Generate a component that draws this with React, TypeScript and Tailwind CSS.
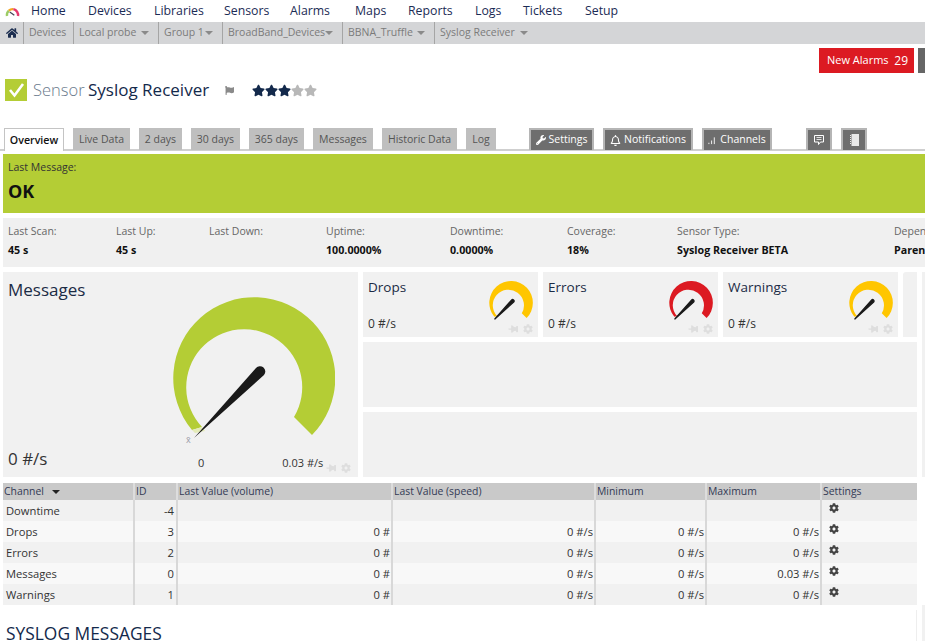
import React from "react";
import { FaHome, FaCog, FaWrench, FaStar, FaThumbtack, FaFlag, FaRegBell } from "react-icons/fa";

const nav = [
  ["Home", "w-[57px]"],
  ["Devices", "w-[66px]"],
  ["Libraries", "w-[70px]"],
  ["Sensors", "w-[66px]"],
  ["Alarms", "w-[65px]"],
  ["Maps", "w-[53px]"],
  ["Reports", "w-[67px]"],
  ["Logs", "w-[48px]"],
  ["Tickets", "w-[62px]"],
  ["Setup", "w-[50px]"],
];

const crumbs = [
  ["Devices", false, "w-[50px]"],
  ["Local probe", true, "w-[85px]"],
  ["Group 1", true, "w-[64px]"],
  ["BroadBand_Devices", true, "w-[120px]"],
  ["BBNA_Truffle", true, "w-[92px]"],
  ["Syslog Receiver", true, "w-[103px]"],
] as const;

const tabs = [
  ["Live Data", "w-[57px]"],
  ["2 days", "w-[43px]"],
  ["30 days", "w-[49px]"],
  ["365 days", "w-[55px]"],
  ["Messages", "w-[60px]"],
  ["Historic Data", "w-[75px]"],
  ["Log", "w-[30px]"],
];

const stats = [
  ["Last Scan:", "45 s", "w-[108px]"],
  ["Last Up:", "45 s", "w-[93px]"],
  ["Last Down:", "", "w-[117px]"],
  ["Uptime:", "100.0000%", "w-[124px]"],
  ["Downtime:", "0.0000%", "w-[117px]"],
  ["Coverage:", "18%", "w-[110px]"],
  ["Sensor Type:", "Syslog Receiver BETA", "w-[217px]"],
  ["Dependency:", "Parent", "w-[100px]"],
];

const rows = [
  ["Downtime", "-4", "", "", "", ""],
  ["Drops", "3", "0 #", "0 #/s", "0 #/s", "0 #/s"],
  ["Errors", "2", "0 #", "0 #/s", "0 #/s", "0 #/s"],
  ["Messages", "0", "0 #", "0 #/s", "0 #/s", "0.03 #/s"],
  ["Warnings", "1", "0 #", "0 #/s", "0 #/s", "0 #/s"],
];

function Gauge({ color, className, thick }: { color: string; className: string; thick?: boolean }) {
  return (
    <svg viewBox="173 297 162 145" className={className}>
      <path d="M192 430 A81 81 0 1 1 312 435 L294 417 A58 58 0 1 0 202 427 Z" fill={color} />
      <path d="M192 430 L202 427 L205 431 L195 433 Z" fill="#e4ebb8" opacity={thick ? 0 : 1} />
      <path
        d="M194 438 L256 368 A5 5 0 0 1 264 375 Z"
        fill="#1a1a1a"
        stroke="#1a1a1a"
        strokeWidth={thick ? 5 : 0}
        strokeLinejoin="round"
      />
    </svg>
  );
}

function PinGear() {
  return (
    <div className="flex items-center gap-[5px] text-[#dedede]">
      <FaThumbtack className="w-[10px] h-[10px] rotate-90" />
      <FaCog className="w-[10px] h-[10px]" />
    </div>
  );
}

function SmallGauge({ title, color }: { title: string; color: string }) {
  return (
    <div className="w-[175px] h-[65px] bg-[#f1f1f1] flex justify-between pl-[5px] pr-[5px]">
      <div className="flex flex-col">
        <div className="text-[13.5px] leading-[18px] mt-[6px] text-[#1b2b45]">{title}</div>
        <div className="text-[12px] leading-[16px] mt-[20px] text-[#333]">0 #/s</div>
      </div>
      <div className="flex flex-col items-end">
        <Gauge color={color} thick className="w-[44px] h-[39px] mt-[9px]" />
        <div className="mt-[4px]"><PinGear /></div>
      </div>
    </div>
  );
}

function TabIcon({ children, label }: { children: React.ReactNode; label?: string }) {
  return (
    <div className="h-[22px] flex items-center justify-center gap-[3px] bg-[#6e6e6e] border-2 border-b-0 border-[#b5b5b5] text-white text-[10.5px] w-full">
      {children}
      {label && <span>{label}</span>}
    </div>
  );
}

export default function App() {
  return (
    <div
      className="w-[925px] h-[641px] overflow-hidden bg-white text-[#333]"
      style={{ fontFamily: '"Open Sans", "Noto Sans", sans-serif' }}
    >
      {/* top nav */}
      <div className="h-[22px] flex items-center">
        <div className="w-[31px] pl-[5px] flex items-center">
          <svg viewBox="0 0 16 12" className="w-[15px] h-[11px]">
            <path d="M2 11 A6.5 6.5 0 0 1 4 5" fill="none" stroke="#9ccc65" strokeWidth="2.6" />
            <path d="M4 5 A6.5 6.5 0 0 1 9 3.5" fill="none" stroke="#f5a623" strokeWidth="2.6" />
            <path d="M9 3.5 A6.5 6.5 0 0 1 14 11" fill="none" stroke="#e5386d" strokeWidth="2.6" />
            <path d="M10 10 L5 6.5" stroke="#445" strokeWidth="1.4" />
          </svg>
        </div>
        {nav.map(([t, w]) => (
          <div key={t} className={`${w} text-[12.3px] text-[#1b2b55] whitespace-nowrap`}>{t}</div>
        ))}
      </div>

      {/* breadcrumb */}
      <div className="h-[22px] bg-[#d4d5d7] flex items-center text-[10.5px] text-[#7b7b7b]">
        <div className="w-[23px] h-full flex items-center justify-center text-[#1c2e50]">
          <FaHome className="w-[12px] h-[12px]" />
        </div>
        {crumbs.map(([t, caret, w]) => (
          <div key={t} className={`${w} h-full border-l border-[#a5a5a5] pl-[5px] flex items-center whitespace-nowrap`}>
            <span>{t}</span>
            {caret && (
              <span className="ml-auto mr-[9px] w-0 h-0 border-x-[4px] border-x-transparent border-t-[4px] border-t-[#8a8a8a]" />
            )}
          </div>
        ))}
      </div>

      {/* alarms */}
      <div className="h-[25px] mt-[4px] flex justify-end gap-[4px]">
        <div className="w-[95px] bg-[#dc1a22] text-white text-[11px] flex items-center justify-between px-[6px] font-medium">
          <span className="ml-[2px]">New Alarms</span>
          <span className="text-[12px]">29</span>
        </div>
        <div className="w-[7px] bg-[#666]" />
      </div>

      {/* title */}
      <div className="h-[22px] mt-[6px] ml-[5px] flex items-center">
        <div className="w-[22px] h-[22px] bg-[#b4cd35] flex items-center justify-center">
          <svg viewBox="0 0 22 22" className="w-[22px] h-[22px]">
            <path d="M5 11 L9.5 16.5 L18 5" fill="none" stroke="#fff" strokeWidth="2.6" />
          </svg>
        </div>
        <div className="ml-[6px] text-[17px] font-light whitespace-nowrap">
          <span className="text-[#6a7a8c] text-[16.5px] mr-[-1px]">Sensor</span> <span className="text-[#13294b] font-normal">Syslog Receiver</span>
        </div>
        <FaFlag className="ml-[16px] w-[9px] h-[9px] text-[#8a8a8a]" />
        <div className="ml-[18px] flex">
          {[0, 1, 2].map((i) => <FaStar key={i} className="w-[13px] h-[13px] text-[#13294b]" />)}
          {[3, 4].map((i) => <FaStar key={i} className="w-[13px] h-[13px] text-[#b8b8b8]" />)}
        </div>
      </div>

      {/* tabs */}
      <div className="h-[23px] mt-[27px] pl-[4px] flex border-b-2 border-[#cfcfcf]">
        <div className="w-[60px] h-[23px] bg-white border border-b-0 border-[#c4c4c4] text-[10.7px] font-semibold text-[#111] flex items-center justify-center mr-[9px] -mb-[2px]">Overview</div>
        <div className="flex gap-[9px]">
          {tabs.map(([t, w]) => (
            <div key={t} className={`${w} h-[22px] pt-[1px] bg-[#bfbfbf] text-[10.5px] text-[#555] flex items-center justify-center whitespace-nowrap`}>{t}</div>
          ))}
        </div>
        <div className="w-[65px] ml-[33px]">
          <TabIcon label="Settings"><FaWrench className="w-[10px] h-[10px]" /></TabIcon>
        </div>
        <div className="w-[90px] ml-[9px]">
          <TabIcon label="Notifications"><FaRegBell className="w-[11px] h-[11px]" /></TabIcon>
        </div>
        <div className="w-[70px] ml-[9px]">
          <TabIcon label="Channels">
            <svg viewBox="0 0 10 10" className="w-[9px] h-[9px]"><path d="M1 9V7.5M4 9V5M7 9V1.5" stroke="#fff" strokeWidth="1" /></svg>
          </TabIcon>
        </div>
        <div className="w-[26px] ml-[34px]">
          <TabIcon>
            <svg viewBox="0 0 10 10" className="w-[10px] h-[10px]">
              <path d="M0.5 0.5H9.5V7H6.5L4.5 9.5V7H0.5Z" fill="none" stroke="#fff" strokeWidth="1" />
              <path d="M2.5 2.5H7.5M2.5 4.5H7.5" stroke="#fff" strokeWidth="0.8" />
            </svg>
          </TabIcon>
        </div>
        <div className="w-[26px] ml-[9px]">
          <TabIcon>
            <svg viewBox="0 0 9 12" className="w-[9px] h-[12px]">
              <path d="M1.5 0H9V12H1.5Z" fill="#e8e8e8" />
              <path d="M0 1.5H1M0 3.5H1M0 5.5H1M0 7.5H1M0 9.5H1" stroke="#e8e8e8" strokeWidth="1" />
            </svg>
          </TabIcon>
        </div>
      </div>

      {/* status */}
      <div className="h-[59px] mt-[3px] ml-[3px] bg-[#b4cd35] pl-[5px] pt-[6px]">
        <div className="text-[10.5px] leading-[15px] text-[#333]">Last Message:</div>
        <div className="text-[18px] leading-[22px] font-bold text-[#111] mt-[5px]">OK</div>
      </div>

      {/* stats */}
      <div className="h-[49px] mt-[5px] ml-[3px] bg-[#f0f0f0] pl-[5px] pt-[6px] flex overflow-hidden">
        {stats.map(([a, b, w]) => (
          <div key={a} className={`${w} shrink-0`}>
            <div className="text-[10.5px] leading-[15px] text-[#666]">{a}</div>
            <div className="text-[10.7px] leading-[15px] font-bold text-[#111] mt-[4px] whitespace-nowrap">{b}</div>
          </div>
        ))}
      </div>

      {/* panels */}
      <div className="mt-[5px] ml-[3px] flex gap-[5px] h-[205px]">
        <div className="w-[355px] bg-[#f1f1f1] flex pl-[5px]">
          <div className="w-[162px] flex flex-col justify-between text-[#1b2b45] pb-[6px]">
            <div className="text-[17px] leading-[24px] mt-[6px]">Messages</div>
            <div className="text-[17px] leading-[24px] text-[#333]">0 #/s</div>
          </div>
          <div className="w-[188px] pt-[25px] relative">
            <Gauge color="#b4cd35" className="ml-[3px] w-[162px] h-[145px]" />
            <span className="absolute left-[16px] top-[163px] text-[9px] leading-[10px] text-[#9a9aa8]">x̄</span>
            <div className="flex items-center text-[11px] mt-[11px] ml-[28px]">
              <span>0</span>
              <span className="ml-[78px]">0.03 #/s</span>
              <div className="ml-[3px] mt-[10px]"><PinGear /></div>
            </div>
          </div>
        </div>
        <div className="w-[554px] flex flex-col gap-[5px]">
          <div className="flex gap-[5px] h-[65px]">
            <SmallGauge title="Drops" color="#ffc600" />
            <SmallGauge title="Errors" color="#dc1a22" />
            <SmallGauge title="Warnings" color="#ffc600" />
            <div className="w-[14px] bg-[#f1f1f1] rounded-tl-[3px]" />
          </div>
          <div className="h-[65px] bg-[#f1f1f1]" />
          <div className="h-[65px] bg-[#f1f1f1]" />
        </div>
        <div className="w-[3px] bg-[#f1f1f1]" />
      </div>

      {/* table */}
      <table className="mt-[6px] ml-[3px] w-[914px] table-fixed border-collapse text-[11.2px]">
        <colgroup>
          <col className="w-[131px]" />
          <col className="w-[43px]" />
          <col className="w-[215px]" />
          <col className="w-[203px]" />
          <col className="w-[111px]" />
          <col className="w-[115px]" />
          <col className="w-[96px]" />
        </colgroup>
        <thead>
          <tr className="h-[17px] bg-[#c9c9c9] text-[10.4px] text-[#333a55] font-normal text-left">
            <th className="font-normal pl-[1px] p-0 leading-[17px]">
              <span className="inline-flex items-center gap-[8px]">Channel<span className="w-0 h-0 border-x-[4px] border-x-transparent border-t-[4px] border-t-[#222]" /></span>
            </th>
            {["ID", "Last Value (volume)", "Last Value (speed)", "Minimum", "Maximum", "Settings"].map((h) => (
              <th key={h} className="font-normal p-0 pl-[1px] leading-[17px] border-l-2 border-[#dddddd]">{h}</th>
            ))}
          </tr>
        </thead>
        <tbody>
          {rows.map((r, i) => (
            <tr key={r[0]} className={`h-[21px] ${i % 2 === 0 ? "bg-[#f1f1f1]" : "bg-[#f8f8f8]"}`}>
              <td className="p-0 pl-[3px] leading-[21px]">{r[0]}</td>
              {r.slice(1).map((c, j) => (
                <td key={j} className={`p-0 text-right leading-[21px] border-l-2 border-[#d8d8d8] ${j === 0 ? "pr-[2px]" : "pr-[1px]"}`}>{c}</td>
              ))}
              <td className="p-0 border-l-2 border-[#d8d8d8]">
                <FaCog className="w-[10px] h-[10px] ml-[7px] -mt-[5px] text-[#444]" />
              </td>
            </tr>
          ))}
        </tbody>
      </table>

      <div className="h-[36px] flex">
        <div className="w-[917px] mt-[5px] border-r border-[#eeeeee]">
          <h2 className="mt-[11px] ml-[6px] text-[17.4px] leading-[24px] font-normal text-[#13294b]">SYSLOG MESSAGES</h2>
        </div>
        <div className="w-[3px] ml-[5px] bg-[#f1f1f1]" />
      </div>
    </div>
  );
}
